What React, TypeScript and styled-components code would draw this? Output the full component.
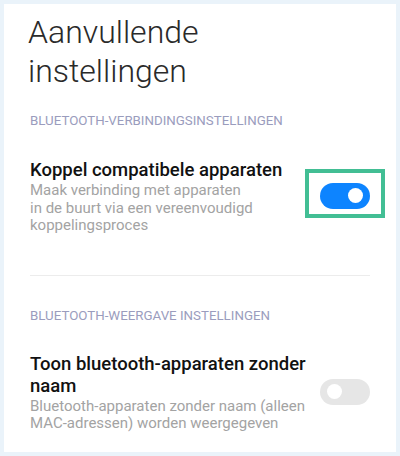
import styled, { createGlobalStyle } from 'styled-components';

const GlobalStyle = createGlobalStyle`
    html, body {
        margin: 0;
        padding: 0;
        background: #eaf3fa;
    }
    body {
        font-family: Roboto, "Noto Sans", "Liberation Sans", sans-serif;
    }
`;

const Panel = styled.div`
    box-sizing: border-box;
    margin: 4px;
    width: 392px;
    height: 448px;
    background: #ffffff;
    padding-top: 9px;
    overflow: hidden;
`;

const Title = styled.h1`
    margin: 0 0 0 24px;
    font-size: 32px;
    font-weight: 300;
    line-height: 39px;
    color: #2a2a2a;
`;

const SectionHeader = styled.h2<{ $top: number }>`
    margin: ${props => props.$top}px 0 0 26px;
    font-size: 13.3px;
    font-weight: 400;
    line-height: 16px;
    color: #9a9cbd;
    text-transform: uppercase;
`;

const Row = styled.div<{ $top: number }>`
    display: flex;
    align-items: center;
    margin-top: ${props => props.$top}px;
    padding: 0 15px 0 26px;
`;

const RowText = styled.div`
    flex: 1;
    min-width: 0;
`;

const RowTitle = styled.div`
    font-size: 18.5px;
    font-weight: 500;
    line-height: 22px;
    color: #111111;
`;

const RowDesc = styled.div`
    margin-top: 1px;
    font-size: 15px;
    line-height: 17.5px;
    color: #a3a3a3;
`;

const ToggleSlot = styled.div<{ $highlight?: boolean }>`
    flex: none;
    box-sizing: border-box;
    width: 72px;
    height: 41px;
    margin-bottom: 7px;
    padding: 10px 11px 5px;
    outline: ${props => (props.$highlight ? '4px solid #42be94' : 'none')};
`;

const Toggle = styled.div<{ $on: boolean }>`
    position: relative;
    width: 50px;
    height: 26px;
    border-radius: 13px;
    background: ${props => (props.$on ? '#0d84ff' : '#e6e6e6')};

    &::after {
        content: '';
        position: absolute;
        top: 5.5px;
        ${props => (props.$on ? 'right: 7px;' : 'left: 7px;')}
        width: 15px;
        height: 15px;
        border-radius: 50%;
        background: #ffffff;
    }
`;

const Divider = styled.hr`
    margin: 40px 26px 0;
    border: none;
    border-top: 1px solid #ececec;
`;

export default function App() {
    return (
        <>
            <GlobalStyle />
            <Panel>
                <Title>
                    Aanvullende
                    <br />
                    instellingen
                </Title>

                <SectionHeader $top={22}>Bluetooth-verbindingsinstellingen</SectionHeader>
                <Row $top={30}>
                    <RowText>
                        <RowTitle>Koppel compatibele apparaten</RowTitle>
                        <RowDesc>
                            Maak verbinding met apparaten
                            <br />
                            in de buurt via een vereenvoudigd
                            <br />
                            koppelingsproces
                        </RowDesc>
                    </RowText>
                    <ToggleSlot $highlight>
                        <Toggle $on />
                    </ToggleSlot>
                </Row>

                <Divider />

                <SectionHeader $top={32}>Bluetooth-weergave instellingen</SectionHeader>
                <Row $top={29}>
                    <RowText>
                        <RowTitle>Toon bluetooth-apparaten zonder naam</RowTitle>
                        <RowDesc>
                            Bluetooth-apparaten zonder naam (alleen MAC-adressen) worden weergegeven
                        </RowDesc>
                    </RowText>
                    <ToggleSlot>
                        <Toggle $on={false} />
                    </ToggleSlot>
                </Row>
            </Panel>
        </>
    );
}
